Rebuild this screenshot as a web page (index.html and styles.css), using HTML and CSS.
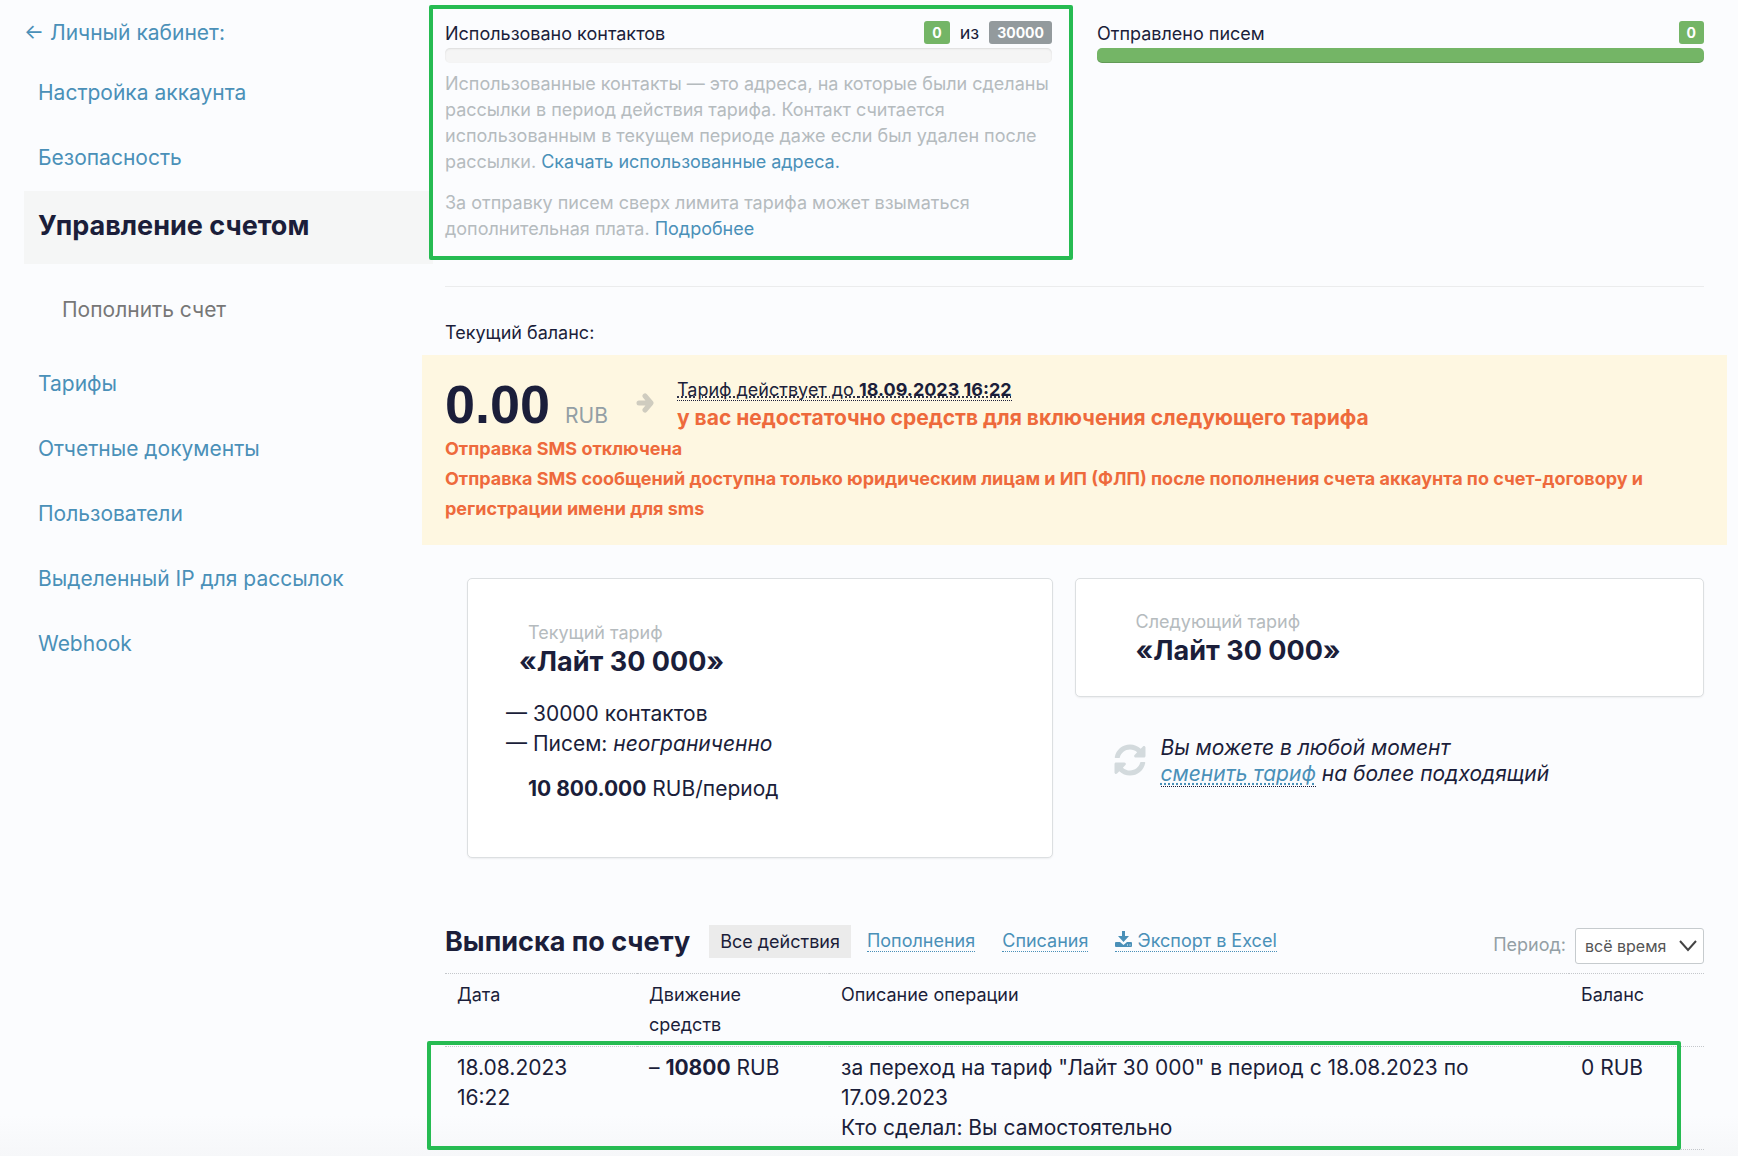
FILE: index.html
```html
<!DOCTYPE html>
<html lang="ru">
<head>
    <meta charset="UTF-8">
    <meta name="viewport" content="width=device-width, initial-scale=1.0">
    <title>Управление счетом</title>
    <link rel="stylesheet" href="styles.css">
</head>
<body>
    <div class="page">
        <nav class="sidebar">
            <a class="back" href="#">← Личный кабинет:</a>
            <ul class="menu">
                <li><a href="#">Настройка аккаунта</a></li>
                <li><a href="#">Безопасность</a></li>
                <li class="active"><a href="#">Управление счетом</a></li>
                <li class="sub"><a href="#">Пополнить счет</a></li>
                <li><a href="#">Тарифы</a></li>
                <li><a href="#">Отчетные документы</a></li>
                <li><a href="#">Пользователи</a></li>
                <li><a href="#">Выделенный IP для рассылок</a></li>
                <li><a href="#">Webhook</a></li>
            </ul>
        </nav>

        <main class="content">
            <section class="usage">
                <div class="usage-col marked">
                    <div class="usage-head">
                        <span>Использовано контактов</span>
                        <span class="counts"><b class="badge green">0</b> из <b class="badge">30000</b></span>
                    </div>
                    <div class="progress"></div>
                    <p>Использованные контакты — это адреса, на которые были сделаны рассылки в период действия тарифа. Контакт считается использованным в текущем периоде даже если был удален после рассылки. <a href="#">Скачать использованные адреса.</a></p>
                    <p>За отправку писем сверх лимита тарифа может взыматься дополнительная плата. <a href="#">Подробнее</a></p>
                </div>
                <div class="usage-col">
                    <div class="usage-head">
                        <span>Отправлено писем</span>
                        <span class="counts"><b class="badge green">0</b></span>
                    </div>
                    <div class="progress full"></div>
                </div>
            </section>

            <div class="balance-label">Текущий баланс:</div>
            <section class="balance">
                <div class="balance-row">
                    <div class="amount"><b>0.00</b> <span>RUB</span></div>
                    <svg class="arrow" viewBox="0 0 18 20" width="18" height="20" aria-hidden="true">
                        <path d="M3 10h11M9 3l6 7-6 7"/>
                    </svg>
                    <div class="balance-info">
                        <div><a class="until" href="#">Тариф действует до <b>18.09.2023 16:22</b></a></div>
                        <div class="lack">у вас недостаточно средств для включения следующего тарифа</div>
                    </div>
                </div>
                <p class="sms">Отправка SMS отключена<br>Отправка SMS сообщений доступна только юридическим лицам и ИП (ФЛП) после пополнения счета аккаунта по счет-договору и регистрации имени для sms</p>
            </section>

            <section class="tariffs">
                <div class="card current">
                    <div class="card-label">Текущий тариф</div>
                    <h3>«Лайт 30 000»</h3>
                    <ul>
                        <li>30000 контактов</li>
                        <li>Писем: <i>неограниченно</i></li>
                    </ul>
                    <div><b>10 800.000</b> RUB/период</div>
                </div>
                <div>
                    <div class="card next">
                        <div class="card-label">Следующий тариф</div>
                        <h3>«Лайт 30 000»</h3>
                    </div>
                    <div class="change">
                        <svg viewBox="0 0 512 512" width="32" height="32" aria-hidden="true">
                            <path d="M370.72 133.28C339.458 104.008 298.888 87.962 255.848 88c-77.458.068-144.328 53.178-162.791 126.85-1.344 5.363-6.122 9.15-11.651 9.15H24.103c-7.498 0-13.194-6.807-11.807-14.176C33.933 94.924 134.813 8 256 8c66.448 0 126.791 26.136 171.315 68.685L463.03 40.97C478.149 25.851 504 36.559 504 57.941V192c0 13.255-10.745 24-24 24H345.941c-21.382 0-32.09-25.851-16.971-40.971l41.75-41.749zM32 296h134.059c21.382 0 32.09 25.851 16.971 40.971l-41.75 41.75c31.262 29.273 71.835 45.319 114.876 45.28 77.418-.07 144.315-53.144 162.787-126.849 1.344-5.363 6.122-9.15 11.651-9.15h57.304c7.498 0 13.194 6.807 11.807 14.176C478.067 417.076 377.187 504 256 504c-66.448 0-126.791-26.136-171.315-68.685L48.97 471.03C33.851 486.149 8 475.441 8 454.059V320c0-13.255 10.745-24 24-24z"/>
                        </svg>
                        <p>Вы можете в любой момент<br><a href="#">сменить тариф</a> на более подходящий</p>
                    </div>
                </div>
            </section>

            <section class="statement">
                <div class="statement-head">
                    <h2>Выписка по счету</h2>
                    <button type="button" class="filter-active">Все действия</button>
                    <a href="#">Пополнения</a>
                    <a href="#">Списания</a>
                    <a href="#"><svg viewBox="0 0 17 16" width="17" height="16" aria-hidden="true">
                        <path d="M7 0h3v5h4l-5.500 6L3 5h4zM1 11h4l3.500 3 3.500-3h4a1 1 0 0 1 1 1v3a1 1 0 0 1-1 1H1a1 1 0 0 1-1-1v-3a1 1 0 0 1 1-1zM12 13.500v1h1v-1zM14.500 13.500v1h1v-1z" fill-rule="evenodd"/>
                    </svg> Экспорт в Excel</a>
                    <div class="period">
                        <label for="period">Период:</label>
                        <div class="select">
                            <select id="period">
                                <option>всё время</option>
                            </select>
                            <svg viewBox="0 0 18 12" width="18" height="12" aria-hidden="true">
                                <path d="M1 1l8 9 8-9"/>
                            </svg>
                        </div>
                    </div>
                </div>
                <div class="table-wrap">
                    <table>
                        <thead>
                            <tr>
                                <th class="date">Дата</th>
                                <th class="move">Движение средств</th>
                                <th>Описание операции</th>
                                <th class="rest">Баланс</th>
                            </tr>
                        </thead>
                        <tbody>
                            <tr>
                                <td>18.08.2023<br>16:22</td>
                                <td>– <b>10800</b> RUB</td>
                                <td>за переход на тариф "Лайт 30 000" в период с 18.08.2023 по 17.09.2023<br>Кто сделал: Вы самостоятельно</td>
                                <td>0 RUB</td>
                            </tr>
                        </tbody>
                    </table>
                </div>
            </section>
        </main>
    </div>
</body>
</html>
```
FILE: styles.css
```css
* {
    box-sizing: border-box;
}
body {
    margin: 0;
    min-height: 100vh;
    font-family: Inter, "Noto Sans", sans-serif;
    font-size: 21px;
    line-height: 30px;
    color: #1b1e3a;
    background: #fbfcfe linear-gradient(to top, #f6f7f9, #fbfcfe 40px);
}
h2, h3, p, ul {
    margin: 0;
    padding: 0;
}
ul {
    list-style: none;
}
a {
    color: #4a90b8;
    text-decoration: none;
}

/* sidebar */
.page {
    display: flex;
    gap: 12px;
    padding: 18px 34px 0 24px;
}
.sidebar {
    flex: 0 0 409px;
}
.back {
    display: block;
}
.menu {
    padding-top: 12px;
    line-height: 31px;
}
.menu a {
    display: block;
    padding: 17px 14px;
}
.menu .active {
    margin-top: 1px;
    background: #f5f6f6;
    font-size: 27px;
    font-weight: 700;
}
.menu .active a {
    padding: 19px 14px 23px;
    color: #1b1e3a;
}
.menu .sub a {
    padding: 30px 38px 26px;
    color: #777;
}

/* usage */
.content {
    flex: 1;
    min-width: 0;
}
.usage {
    display: grid;
    grid-template-columns: 1fr 1fr;
    gap: 45px;
    padding-bottom: 44px;
    border-bottom: 1px solid #ebeced;
    font-size: 18px;
}
.usage-col {
    position: relative;
}
.usage-head {
    display: flex;
    justify-content: space-between;
    height: 30px;
    line-height: 32px;
}
.counts {
    display: flex;
    align-items: center;
    gap: 10px;
    height: 29px;
}
.badge {
    padding: 0 8px;
    border-radius: 3px;
    background: #939a9d;
    color: #fff;
    font-size: 14px;
    line-height: 23px;
}
.badge.green {
    background: #74b566;
}
.progress {
    height: 15px;
    margin-bottom: 8px;
    border-radius: 5px;
    background: #f5f5f5;
    box-shadow: inset 0 1px 2px rgba(0, 0, 0, 0.1);
}
.progress.full {
    background: #74b566;
    box-shadow: inset 0 -1px 0 rgba(0, 0, 0, 0.15);
}
.usage p {
    color: #b5bbbe;
    line-height: 26px;
}
.usage p + p {
    margin-top: 15px;
}
.marked::after,
.table-wrap::after {
    content: "";
    position: absolute;
    border: 4px solid #26bb52;
    border-radius: 2px;
    pointer-events: none;
}
.marked::after {
    inset: -13px -21px -18px -16px;
}

/* balance */
.balance-label {
    margin: 31px 0 7px;
    font-size: 18px;
}
.balance {
    margin: 0 -23px;
    padding: 20px 23px 21px;
    background: #fef7e1;
}
.balance-row {
    display: flex;
    height: 59px;
}
.amount {
    display: flex;
    align-items: baseline;
    gap: 15px;
    line-height: 58px;
}
.amount b {
    font-family: "Liberation Sans", Arial, sans-serif;
    font-size: 54px;
}
.amount span {
    color: #939fa5;
}
.arrow {
    margin: 18px 23px 0 28px;
    fill: none;
    stroke: #cfccbf;
    stroke-width: 5;
    stroke-linecap: round;
    stroke-linejoin: round;
}
.balance-info {
    line-height: 28px;
}
.until {
    border-bottom: 1px dotted #1b1e3a;
    color: #1b1e3a;
    font-size: 18px;
    text-decoration: underline dotted;
}
.lack,
.sms {
    color: #ee6a3c;
    font-weight: 700;
}
.sms {
    font-size: 18px;
}

/* tariffs */
.tariffs {
    display: grid;
    grid-template-columns: 1fr 1fr;
    margin-top: 33px;
}
.card {
    padding: 28px 60px 31px;
    border: 1px solid #dcdfe1;
    border-radius: 5px;
    background: #fff;
    box-shadow: 0 1px 2px rgba(0, 0, 0, 0.06);
}
.card.current {
    margin: 0 22px;
    padding: 39px 60px 53px;
}
.card-label {
    color: #b5bbbe;
    font-size: 18px;
    line-height: 29px;
}
.card h3 {
    font-size: 27px;
    line-height: 29px;
}
.current h3 {
    margin-left: -9px;
}
.current ul {
    margin: 23px 0 15px -22px;
}
.current li::before {
    content: "— ";
}
.change {
    display: flex;
    align-items: flex-start;
    gap: 15px;
    padding: 38px 0 0 39px;
    font-style: italic;
    line-height: 26px;
}
.change svg {
    margin-top: 9px;
    fill: #d3dadd;
}
.change a {
    border-bottom: 1px dotted #1b1e3a;
    text-decoration: underline dotted;
}

/* statement */
.statement {
    margin-top: 67px;
}
.statement-head {
    display: flex;
    align-items: flex-start;
    height: 48px;
    font-size: 18px;
    line-height: 33px;
}
.statement-head h2 {
    margin-right: 19px;
    font-size: 27px;
}
.filter-active {
    height: 33px;
    margin-right: 16px;
    padding: 0 11px;
    border: none;
    background: #ebebeb;
    color: #1b1e3a;
    font: inherit;
    cursor: pointer;
}
.statement-head > a {
    margin: 5px 27px 0 0;
    border-bottom: 1px dotted #4a90b8;
    line-height: 21px;
}
.statement-head > a svg {
    fill: #4a90b8;
}
.period {
    display: flex;
    gap: 9px;
    margin: 3px 0 0 auto;
    color: #939fa5;
}
.select {
    position: relative;
}
.select select {
    appearance: none;
    width: 129px;
    height: 36px;
    padding: 0 28px 0 9px;
    border: 1px solid #c6cbce;
    border-radius: 3px;
    background: #fff;
    color: #555;
    font-family: inherit;
    font-size: 16px;
}
.select svg {
    position: absolute;
    top: 12px;
    right: 7px;
    fill: none;
    stroke: #444;
    stroke-width: 2;
    pointer-events: none;
}
.table-wrap {
    position: relative;
}
.table-wrap::after {
    inset: 68px 23px 0 -18px;
}
table {
    width: 100%;
    border-collapse: collapse;
    table-layout: fixed;
}
tr {
    border-top: 1px dotted #c4c7cb;
}
tbody tr {
    border-bottom: 1px dotted #c4c7cb;
}
th, td {
    padding: 6px 12px;
    text-align: left;
    vertical-align: top;
}
th {
    font-size: 18px;
    font-weight: 400;
}
.date, .move {
    width: 192px;
}
.rest {
    width: 135px;
}
```
